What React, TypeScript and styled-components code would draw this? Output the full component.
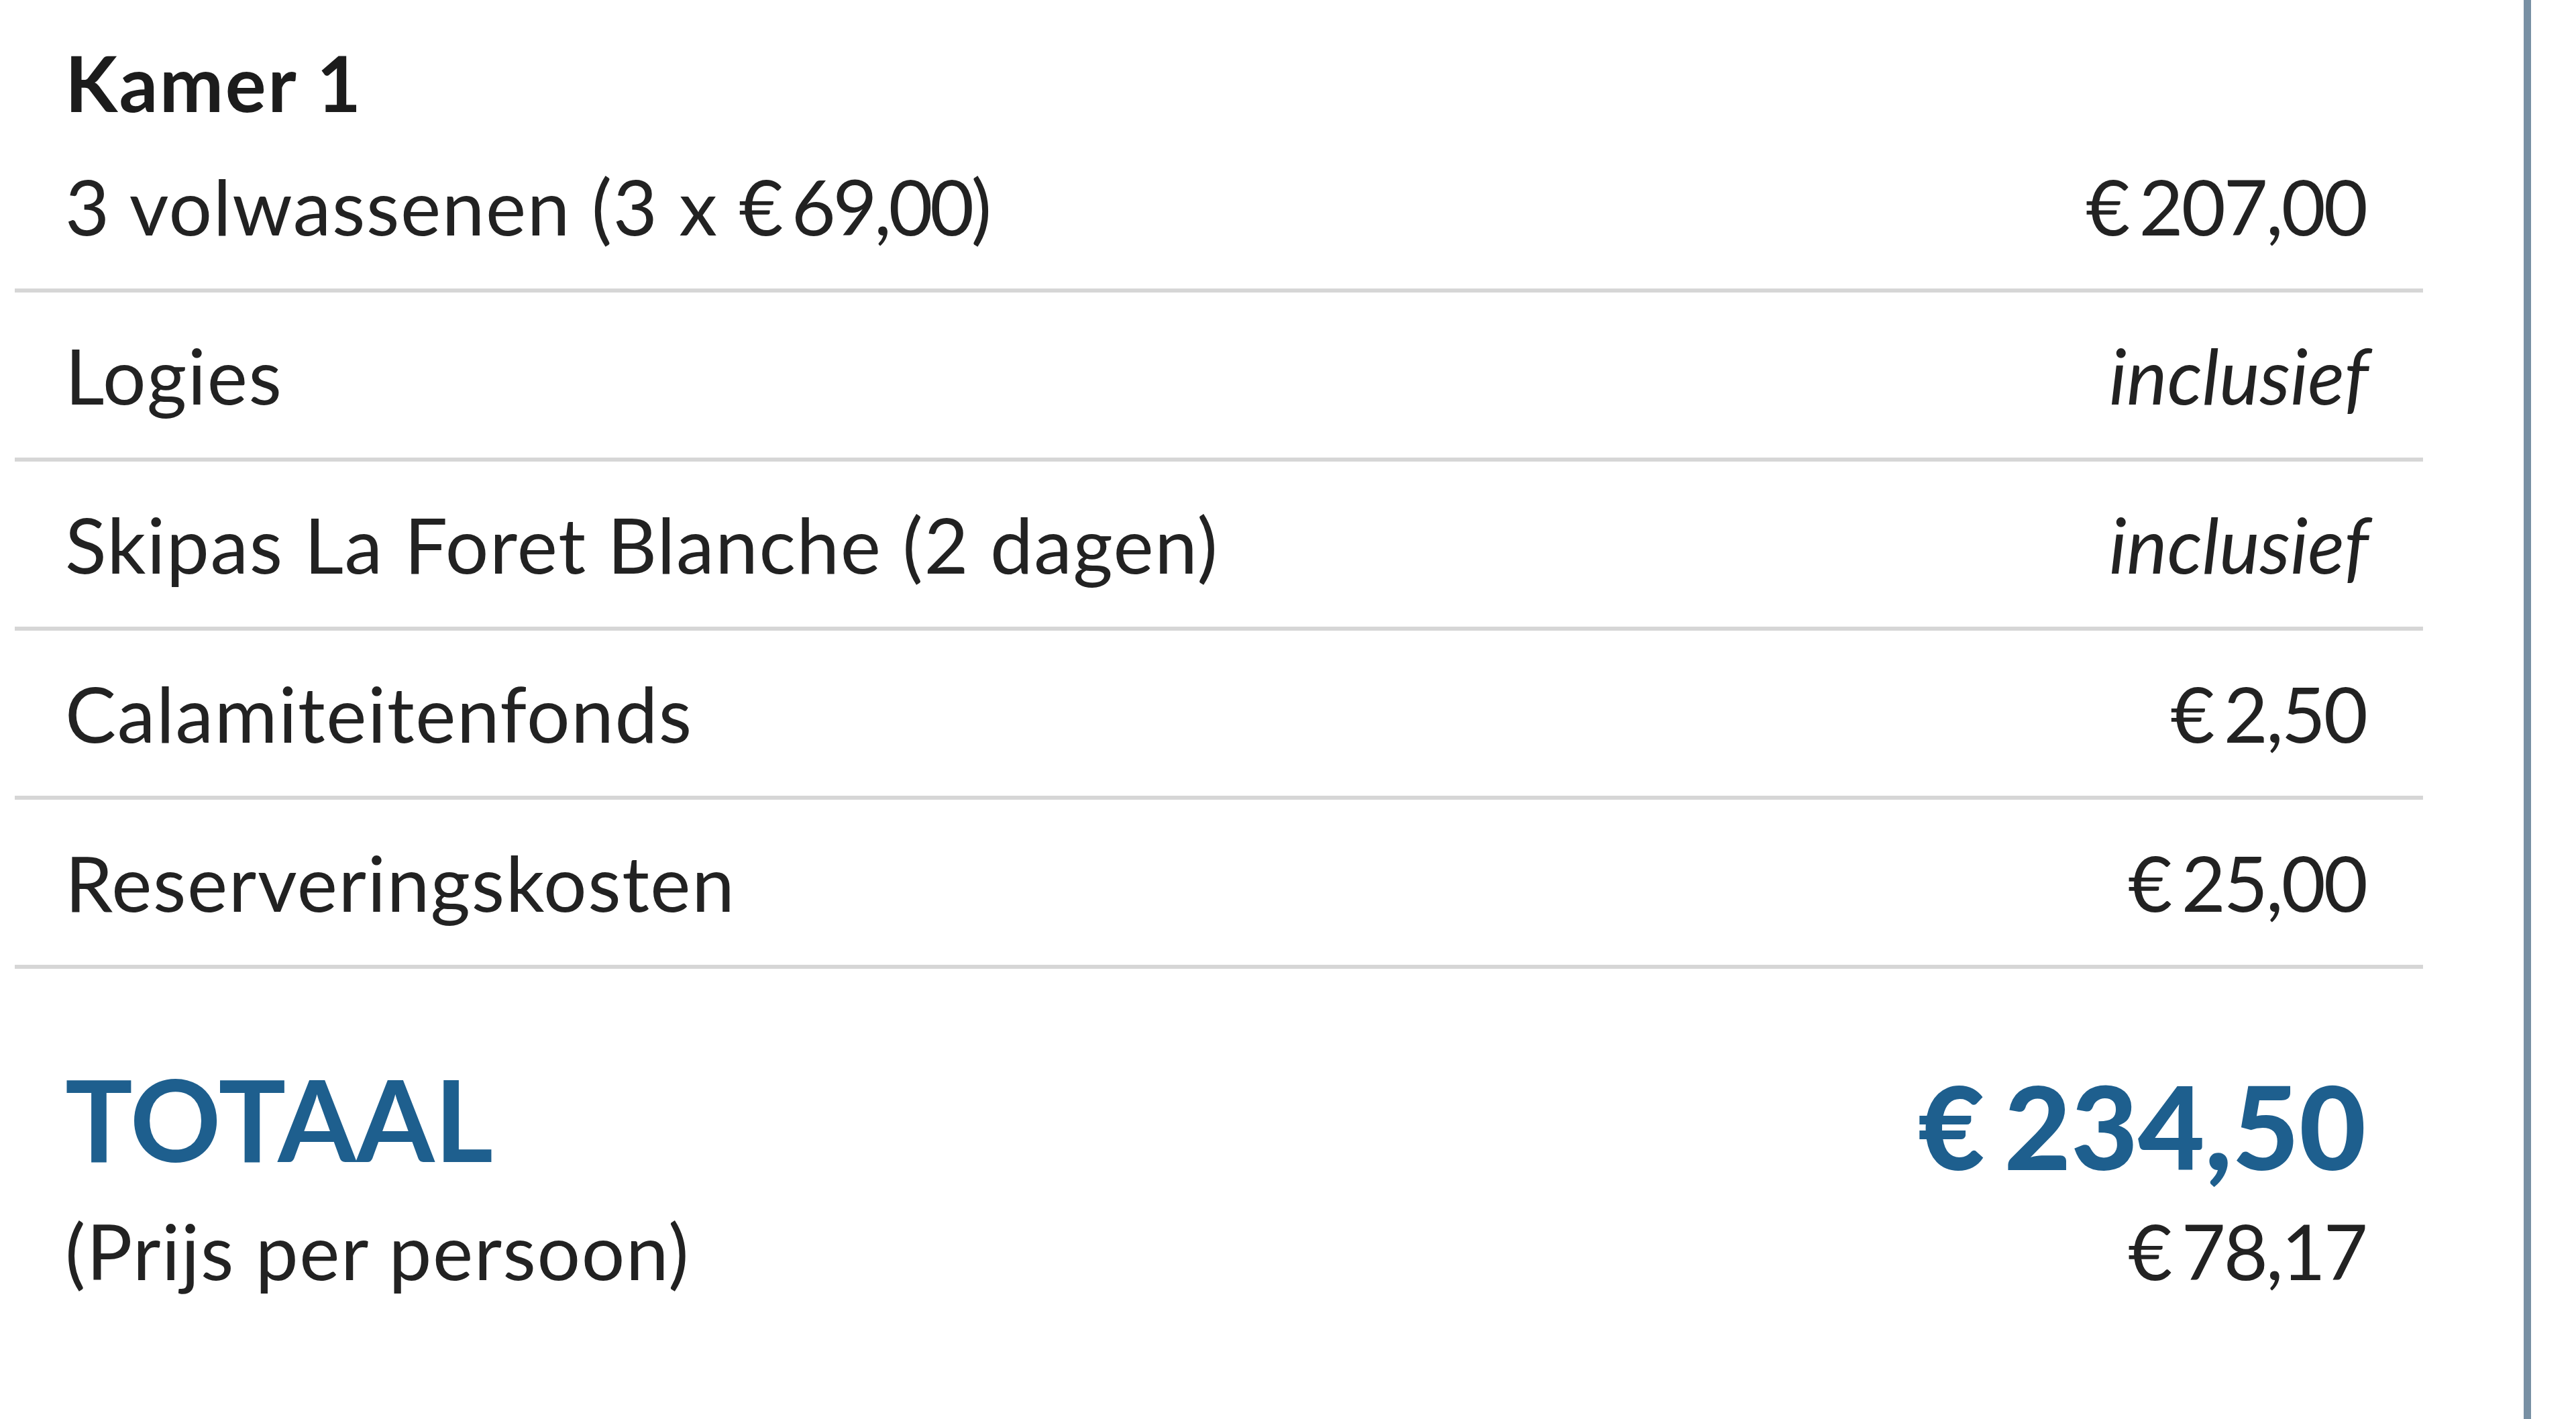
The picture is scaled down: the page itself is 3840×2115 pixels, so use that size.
import styled, { createGlobalStyle } from 'styled-components';

const GlobalStyle = createGlobalStyle`
  html, body {
    margin: 0;
    padding: 0;
    background: #fff;
  }
  body {
    font-family: Lato, "Open Sans", sans-serif;
    color: #222;
  }
`;

type Line = {
  label: string;
  unitPrice?: string;
  amount: string;
  included?: boolean;
};

const lines: Line[] = [
  { label: '3 volwassenen (3 x ', unitPrice: '€ 69,00', amount: '€ 207,00' },
  { label: 'Logies', amount: 'inclusief', included: true },
  { label: 'Skipas La Foret Blanche (2 dagen)', amount: 'inclusief', included: true },
  { label: 'Calamiteitenfonds', amount: '€ 2,50' },
  { label: 'Reserveringskosten', amount: '€ 25,00' },
];

export default function App() {
  return (
    <>
      <GlobalStyle />
      <Panel>
        <RoomTitle>Kamer 1</RoomTitle>
        <PriceList>
          {lines.map((line) => (
            <PriceRow key={line.label}>
              <Label>
                {line.label}
                {line.unitPrice && (
                  <>
                    <Money>{line.unitPrice}</Money>)
                  </>
                )}
              </Label>
              <Amount $included={line.included}>{line.amount}</Amount>
            </PriceRow>
          ))}
        </PriceList>
        <TotalRow>
          <TotalLabel>TOTAAL</TotalLabel>
          <TotalAmount>€ 234,50</TotalAmount>
        </TotalRow>
        <PerPersonRow>
          <Label>(Prijs per persoon)</Label>
          <Amount>€ 78,17</Amount>
        </PerPersonRow>
      </Panel>
    </>
  );
}

const Panel = styled.div`
  box-sizing: border-box;
  width: 3773px;
  min-height: 100vh;
  padding: 0 150px 0 22px;
  border-right: 11px solid #7890a4;
`;

const RoomTitle = styled.h3`
  box-sizing: border-box;
  height: 184px;
  margin: 0;
  padding: 66px 0 0 75px;
  font-size: 114px;
  line-height: 1;
  font-weight: 700;
  letter-spacing: 2.5px;
  color: #1c1c1c;
`;

const PriceList = styled.div`
  display: flex;
  flex-direction: column;
`;

const PriceRow = styled.div`
  display: flex;
  justify-content: space-between;
  align-items: center;
  height: 246px;
  padding: 0 85px 0 75px;
  border-bottom: 6px solid #d6d6d6;
`;

const Label = styled.span`
  font-size: 114px;
  line-height: 1;
  letter-spacing: 1.6px;
  color: #222;
`;

const Money = styled.span`
  letter-spacing: -4.5px;
  word-spacing: -8px;
`;

const Amount = styled.span<{ $included?: boolean }>`
  font-size: 114px;
  line-height: 1;
  color: #222;
  font-style: ${(p) => (p.$included ? 'italic' : 'normal')};
  letter-spacing: ${(p) => (p.$included ? '0' : '-3px')};
  word-spacing: ${(p) => (p.$included ? '0' : '-10px')};
  margin-right: ${(p) => (p.$included ? '-4px' : '0')};
`;

const TotalRow = styled.div`
  display: flex;
  justify-content: space-between;
  align-items: flex-start;
  padding: 139px 85px 0 75px;
`;

const TotalLabel = styled.span`
  font-size: 168px;
  line-height: 1;
  font-weight: 700;
  color: #1e5f8e;
`;

const TotalAmount = styled.span`
  margin-top: 9px;
  font-size: 172px;
  line-height: 1;
  font-weight: 900;
  word-spacing: -12px;
  color: #1e5f8e;
`;

const PerPersonRow = styled.div`
  display: flex;
  justify-content: space-between;
  align-items: flex-start;
  margin-top: 43px;
  padding: 0 85px 0 75px;
`;
